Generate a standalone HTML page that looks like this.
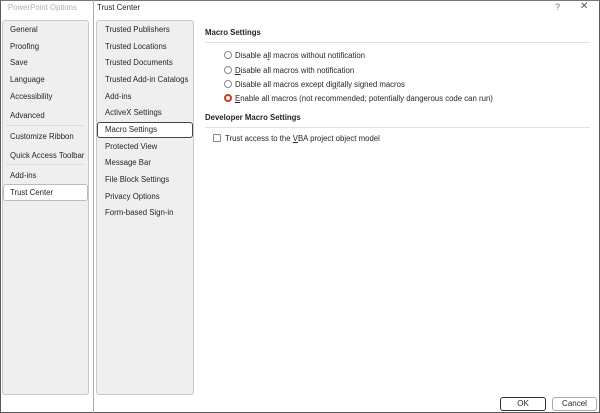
<!DOCTYPE html>
<html><head><style>
*{margin:0;padding:0;box-sizing:border-box}
body{width:600px;height:413px;background:#fff;font-family:"Liberation Sans",sans-serif;font-size:7.8px;color:#262626;position:relative;overflow:hidden}
.a{position:absolute;white-space:nowrap}
.frame{position:absolute;left:0;top:0;width:600px;height:413px;border:1px solid #5a5a5a;border-top:1px solid #777;z-index:5}
.box{position:absolute;background:#efefef;border:1px solid #c8c8c8;border-radius:3px}
.sel{position:absolute;background:#fff;border:1px solid #444;border-radius:3px}
.sep{position:absolute;height:1px;background:#ddd}
.radio{position:absolute;width:8px;height:8px;border:1px solid #888;border-radius:50%;background:#fff}
.btn{position:absolute;height:14px;border:1px solid #aaa;border-radius:3px;background:#fff;text-align:center;line-height:12px;font-size:8px}
u{text-decoration:underline}
</style></head><body>
<div class="frame"></div>
<div class="a" style="left:8px;top:3px;color:#b0b0b0">PowerPoint Options</div>
<div class="a" style="left:97px;top:3px">Trust Center</div>
<div class="a" style="left:555px;top:2px;color:#777;font-size:9px">?</div>
<div class="a" style="left:580px;top:1px;color:#555;font-size:10px">✕</div>
<div style="position:absolute;left:93px;top:0;width:1px;height:413px;background:#e39484;z-index:6"></div>

<div class="box" style="left:2px;top:20px;width:87px;height:375px"></div>
<div class="sep" style="left:6px;top:125px;width:78px"></div>
<div class="sep" style="left:6px;top:164px;width:78px"></div>
<div class="sel" style="left:3px;top:184px;width:85px;height:17px;border-color:#bbb"></div>
<div class="a" style="left:10px;top:25px">General</div>
<div class="a" style="left:10px;top:42px">Proofing</div>
<div class="a" style="left:10px;top:58px">Save</div>
<div class="a" style="left:10px;top:75px">Language</div>
<div class="a" style="left:10px;top:92px">Accessibility</div>
<div class="a" style="left:10px;top:111px">Advanced</div>
<div class="a" style="left:10px;top:132px">Customize Ribbon</div>
<div class="a" style="left:10px;top:151px">Quick Access Toolbar</div>
<div class="a" style="left:10px;top:171px">Add-ins</div>
<div class="a" style="left:10px;top:188px">Trust Center</div>

<div class="box" style="left:96px;top:20px;width:98px;height:375px"></div>
<div class="sel" style="left:97px;top:122px;width:96px;height:16px"></div>
<div class="a" style="left:105px;top:25px">Trusted Publishers</div>
<div class="a" style="left:105px;top:42px">Trusted Locations</div>
<div class="a" style="left:105px;top:58px">Trusted Documents</div>
<div class="a" style="left:105px;top:75px">Trusted Add-in Catalogs</div>
<div class="a" style="left:105px;top:92px">Add-ins</div>
<div class="a" style="left:105px;top:108px">ActiveX Settings</div>
<div class="a" style="left:105px;top:125px">Macro Settings</div>
<div class="a" style="left:105px;top:142px">Protected View</div>
<div class="a" style="left:105px;top:158px">Message Bar</div>
<div class="a" style="left:105px;top:175px">File Block Settings</div>
<div class="a" style="left:105px;top:192px">Privacy Options</div>
<div class="a" style="left:105px;top:208px">Form-based Sign-in</div>

<div class="a" style="left:205px;top:28px;font-weight:bold">Macro Settings</div>
<div class="sep" style="left:205px;top:42px;width:385px;background:#e2e2e2"></div>
<div class="radio" style="left:224px;top:51px"></div>
<div class="radio" style="left:224px;top:66px"></div>
<div class="radio" style="left:224px;top:80px"></div>
<div class="radio" style="left:224px;top:94px;border:2px solid #d13a1e"></div>
<div class="a" style="left:235px;top:51px">Disable a<u>l</u>l macros without notification</div>
<div class="a" style="left:235px;top:66px"><u>D</u>isable all macros with notification</div>
<div class="a" style="left:235px;top:80px">Disable all macros except di<u>g</u>itally signed macros</div>
<div class="a" style="left:235px;top:94px"><u>E</u>nable all macros (not recommended; potentially dangerous code can run)</div>
<div class="a" style="left:205px;top:113px;font-weight:bold">Developer Macro Settings</div>
<div class="sep" style="left:205px;top:127px;width:385px;background:#e2e2e2"></div>
<div style="position:absolute;left:213px;top:134px;width:8px;height:8px;border:1px solid #888;border-radius:1px;background:#fff"></div>
<div class="a" style="left:225px;top:134px">Trust access to the <u>V</u>BA project object model</div>

<div class="btn" style="left:500px;top:397px;width:46px;border-color:#333">OK</div>
<div class="btn" style="left:552px;top:397px;width:45px">Cancel</div>
</body></html>
